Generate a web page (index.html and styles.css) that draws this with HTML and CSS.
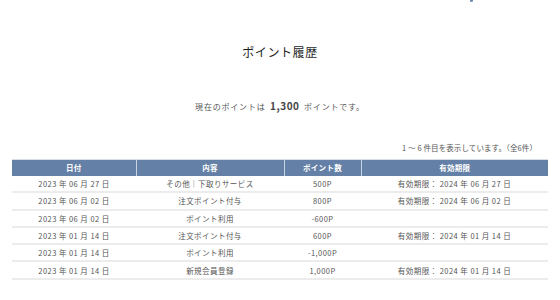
FILE: index.html
```html
<!DOCTYPE html>
<html lang="ja">
<head>
<meta charset="utf-8">
<link rel="stylesheet" href="styles.css">
</head>
<body>
<div class="top-mark"></div>
<main class="page">
  <h1 class="title">ポイント履歴</h1>
  <p class="current">現在のポイントは <strong>1,300</strong> ポイントです。</p>
  <p class="count">1 〜 6 件目を表示しています。（全6件）</p>
  <table class="history">
    <colgroup>
      <col class="c1"><col class="c2"><col class="c3"><col class="c4">
    </colgroup>
    <thead>
      <tr><th>日付</th><th>内容</th><th>ポイント数</th><th>有効期限</th></tr>
    </thead>
    <tbody>
      <tr><td>2023 年 06 月 27 日</td><td>その他｜下取りサービス</td><td>500P</td><td>有効期限： 2024 年 06 月 27 日</td></tr>
      <tr><td>2023 年 06 月 02 日</td><td>注文ポイント付与</td><td>800P</td><td>有効期限： 2024 年 06 月 02 日</td></tr>
      <tr><td>2023 年 06 月 02 日</td><td>ポイント利用</td><td>-600P</td><td></td></tr>
      <tr><td>2023 年 01 月 14 日</td><td>注文ポイント付与</td><td>600P</td><td>有効期限： 2024 年 01 月 14 日</td></tr>
      <tr><td>2023 年 01 月 14 日</td><td>ポイント利用</td><td>-1,000P</td><td></td></tr>
      <tr><td>2023 年 01 月 14 日</td><td>新規会員登録</td><td>1,000P</td><td>有効期限： 2024 年 01 月 14 日</td></tr>
    </tbody>
  </table>
</main>
</body>
</html>
```
FILE: styles.css
```css
html, body {
  margin: 0;
  padding: 0;
  background: #fff;
}
body {
  font-family: "Noto Sans CJK JP", "Noto Sans", sans-serif;
  color: #555;
  position: relative;
}
.top-mark {
  position: absolute;
  left: 470px;
  top: 0;
  width: 3px;
  height: 2px;
  background: #6a8ab0;
  border-radius: 0 0 2px 2px;
}
.page {
  padding: 0 12px;
}
.title {
  margin: 0;
  padding-top: 42px;
  height: 20px;
  line-height: 20px;
  font-size: 12px;
  font-weight: 400;
  letter-spacing: 0.6px;
  text-align: center;
  color: #1e1e1e;
}
.current {
  margin: 0;
  margin-top: 34px;
  height: 20px;
  line-height: 20px;
  font-size: 8px;
  letter-spacing: 0.8px;
  text-align: center;
  color: #555;
}
.current strong {
  font-size: 10px;
  font-weight: 700;
  color: #444;
  margin: 0 2px;
  letter-spacing: 0.5px;
}
.count {
  margin: 0;
  margin-top: 25px;
  padding-right: 11px;
  height: 14px;
  line-height: 14px;
  font-size: 7.5px;
  letter-spacing: 0.1px;
  text-align: right;
  color: #555;
}
.history {
  margin-top: 4px;
  width: 536px;
  border-collapse: collapse;
  table-layout: fixed;
  font-size: 7.5px;
  letter-spacing: 0.45px;
}
.c1 { width: 124px; }
.c2 { width: 148px; }
.c3 { width: 77px; }
.c4 { width: 187px; }
.history th {
  background: #6580a6;
  color: #fff;
  font-weight: 700;
  height: 16px;
  padding: 0;
  border-top: 1px solid #d8dee8;
  border-left: 1px solid #c7d2e2;
  line-height: 16px;
  letter-spacing: 0.3px;
  text-align: center;
}
.history th:first-child { border-left: none; }
.history td {
  height: 15.3px;
  padding: 0;
  line-height: 15px;
  text-align: center;
  border-bottom: 2px solid #ececec;
  color: #555;
  white-space: nowrap;
}
```
